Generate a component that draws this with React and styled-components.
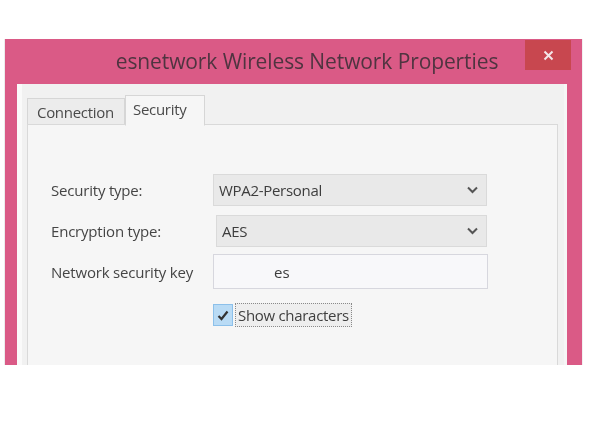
import React from "react";
import styled, { createGlobalStyle } from "styled-components";

const Global = createGlobalStyle`
  html, body { margin: 0; padding: 0; background: #ffffff; }
  body { font-family: "Open Sans", "Liberation Sans", sans-serif; }
`;

const Page = styled.div`
  width: 595px;
  height: 437px;
  padding: 39px 0 0 5px;
  box-sizing: border-box;
  background: #ffffff;
`;

const Dialog = styled.div`
  width: 577px;
  height: 326px;
  overflow: hidden;
  background: #da5a86;
  display: flex;
  flex-direction: column;
  box-shadow: -1px 0 0 #ececec, 1px 0 0 #f1f1f1;
`;

const TitleBar = styled.div`
  height: 45px;
  flex: none;
  display: flex;
  align-items: flex-start;
`;

const Title = styled.div`
  flex: 1;
  text-align: center;
  padding: 8px 0 0 84px;
  font-family: "Open Sans", "Liberation Sans", sans-serif;
  font-size: 21px;
  color: #4f3440;
  letter-spacing: -0.1px;
  white-space: nowrap;
  filter: blur(0.5px);
`;

const CloseButton = styled.div`
  width: 46px;
  height: 30px;
  margin: 1px 11px 0 0;
  background: #c8474f;
  display: flex;
  align-items: center;
  justify-content: center;
  filter: blur(0.4px);
`;

const Body = styled.div`
  flex: 1;
  margin: 0 15px 0 12px;
  background: #f1f1f1;
  border-left: 5px solid #fafafa;
  border-right: 3px solid #f6f6f6;
  padding: 11px 6px 0 5px;
  display: flex;
  flex-direction: column;
`;

const TabStrip = styled.div`
  display: flex;
  align-items: flex-end;
  height: 29px;
  position: relative;
  z-index: 1;
`;

const Tab = styled.div`
  height: ${(p) => (p.$active ? "31px" : "26px")};
  padding: ${(p) => (p.$active ? "2px 0 0 7px" : "2px 0 0 9px")};
  width: ${(p) => p.$w}px;
  box-sizing: border-box;
  background: ${(p) => (p.$active ? "#f6f6f6" : "#ececec")};
  border: 1px solid #d6d6d6;
  border-bottom: ${(p) => (p.$active ? "1px solid #f6f6f6" : "none")};
  margin-bottom: ${(p) => (p.$active ? "-2px" : "0")};
  font-size: 15px;
  color: #4a4a4a;
  line-height: 22px;
  letter-spacing: -0.3px;
  white-space: nowrap;
  filter: blur(0.45px);
`;

const Panel = styled.div`
  flex: 1;
  background: #f6f6f6;
  border: 1px solid #d9d9d9;
  border-bottom: none;
  padding: 49px 0 0 23px;
  display: flex;
  flex-direction: column;
`;

const Row = styled.div`
  display: flex;
  align-items: center;
  height: ${(p) => p.$h}px;
  margin-bottom: ${(p) => p.$mb}px;
`;

const Label = styled.div`
  width: 162px;
  font-size: 15px;
  color: #454545;
  letter-spacing: -0.2px;
  filter: blur(0.45px);
  white-space: nowrap;
`;

const Select = styled.div`
  height: 100%;
  box-sizing: border-box;
  margin-left: ${(p) => p.$ml || 0}px;
  width: ${(p) => p.$w}px;
  background: #e9e9e9;
  border: 1px solid #dadada;
  display: flex;
  align-items: center;
  justify-content: space-between;
  padding: 0 8px 0 5px;
  font-size: 15px;
  letter-spacing: -0.3px;
  color: #3d3d3d;
  filter: blur(0.45px);
`;

const Input = styled.div`
  width: 275px;
  height: 100%;
  box-sizing: border-box;
  background: #f8f8fa;
  border: 1px solid #d7d7de;
  display: flex;
  align-items: center;
  padding-left: 60px;
  font-size: 15px;
  color: #3d3d3d;
  filter: blur(0.45px);
`;

const CheckRow = styled.div`
  display: flex;
  align-items: center;
  margin-left: 162px;
  height: 24px;
`;

const CheckBox = styled.div`
  width: 20px;
  height: 22px;
  box-sizing: border-box;
  background: #b9dbf5;
  border: 1px solid #8cc0ea;
  display: flex;
  align-items: center;
  justify-content: center;
  filter: blur(0.4px);
`;

const CheckLabel = styled.div`
  margin-left: 2px;
  height: 24px;
  box-sizing: border-box;
  border: 1px dotted #8a8a8a;
  background: #eeeeee;
  padding: 0 2px;
  display: flex;
  align-items: center;
  font-size: 15px;
  letter-spacing: -0.3px;
  color: #3f3f3f;
  white-space: nowrap;
  filter: blur(0.45px);
`;

const Arrow = () => (
  <svg width="11" height="8" viewBox="0 0 11 8">
    <path d="M1 1.5 L5.5 6 L10 1.5" stroke="#555" strokeWidth="2" fill="none" />
  </svg>
);

export default function App() {
  return (
    <>
      <Global />
      <Page>
        <Dialog>
          <TitleBar>
            <Title>esnetwork Wireless Network Properties</Title>
            <CloseButton>
              <svg width="11" height="11" viewBox="0 0 11 11">
                <path d="M1.5 1.5 L9.5 9.5 M9.5 1.5 L1.5 9.5" stroke="#f4e6e8" strokeWidth="2" />
              </svg>
            </CloseButton>
          </TitleBar>
          <Body>
            <TabStrip>
              <Tab $w={98}>Connection</Tab>
              <Tab $active $w={80}>Security</Tab>
            </TabStrip>
            <Panel>
              <Row $h={32} $mb={9}>
                <Label>Security type:</Label>
                <Select $w={274}>
                  WPA2-Personal
                  <Arrow />
                </Select>
              </Row>
              <Row $h={32} $mb={7}>
                <Label>Encryption type:</Label>
                <Select $w={271} $ml={3}>
                  AES
                  <Arrow />
                </Select>
              </Row>
              <Row $h={35} $mb={14}>
                <Label>Network security key</Label>
                <Input>es</Input>
              </Row>
              <CheckRow>
                <CheckBox>
                  <svg width="12" height="11" viewBox="0 0 12 11">
                    <path d="M1.5 6 L4.5 9 L10.5 1.5" stroke="#333" strokeWidth="2.2" fill="none" />
                  </svg>
                </CheckBox>
                <CheckLabel>Show characters</CheckLabel>
              </CheckRow>
            </Panel>
          </Body>
        </Dialog>
      </Page>
    </>
  );
}
